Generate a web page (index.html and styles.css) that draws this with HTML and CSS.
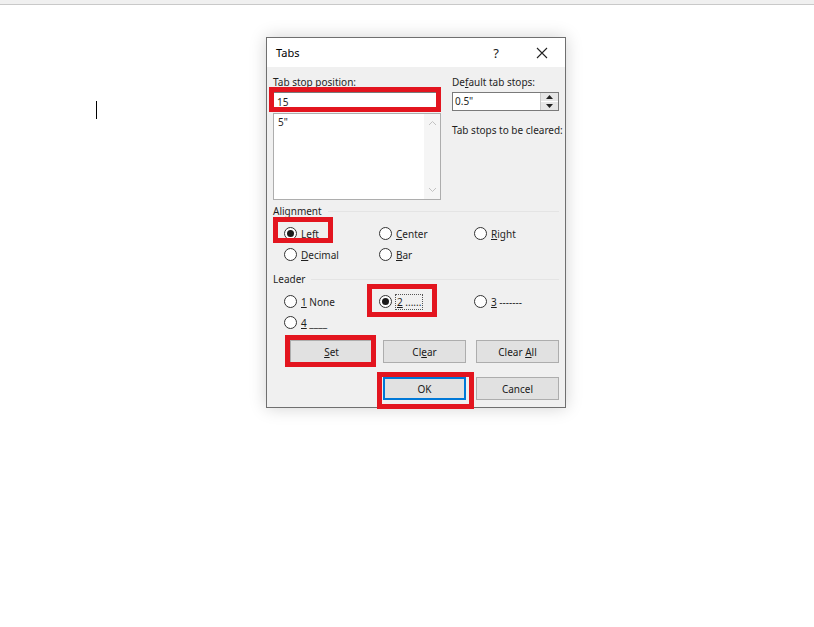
FILE: index.html
```html
<!DOCTYPE html>
<html>
<head>
    <meta charset="UTF-8">
    <title>Tabs</title>
    <link rel="stylesheet" href="styles.css">
</head>
<body>
    <div class="topbar"></div>
    <div class="caret"></div>

    <div class="dialog">
        <div class="titlebar">
            <span class="title">Tabs</span>
            <div class="title-buttons">
                <div class="tbtn">?</div>
                <div class="tbtn">
                    <svg width="12" height="12" viewBox="0 0 12 12">
                        <path d="M1 1 L11 11 M11 1 L1 11" stroke="#222" stroke-width="1.1" fill="none" />
                    </svg>
                </div>
            </div>
        </div>

        <div class="body">
            <div class="top">
                <div class="col-left">
                    <label class="lbl"><u>T</u>ab stop position:</label>
                    <div class="field">15</div>
                    <div class="listbox">
                        <div class="list-item">5"</div>
                        <div class="scroll">
                            <svg width="9" height="6" viewBox="0 0 9 6"><path d="M1 5 L4.5 1.5 L8 5" stroke="#c2c2c2" fill="none" /></svg>
                            <svg width="9" height="6" viewBox="0 0 9 6"><path d="M1 1 L4.5 4.5 L8 1" stroke="#c2c2c2" fill="none" /></svg>
                        </div>
                    </div>
                </div>
                <div class="col-right">
                    <label class="lbl">De<u>f</u>ault tab stops:</label>
                    <div class="spin-field">
                        <div class="spin-text">0.5"</div>
                        <div class="spin">
                            <div class="spin-up"><svg width="7" height="4" viewBox="0 0 7 4"><path d="M0 4 L3.5 0 L7 4 Z" fill="#222" /></svg></div>
                            <div class="spin-down"><svg width="7" height="4" viewBox="0 0 7 4"><path d="M0 0 L3.5 4 L7 0 Z" fill="#222" /></svg></div>
                        </div>
                    </div>
                    <div class="lbl cleared">Tab stops to be cleared:</div>
                </div>
            </div>

            <div class="group-title">Alignment<span class="rule"></span></div>
            <div class="radios">
                <div class="radio"><span class="dot on"></span><span><u>L</u>eft</span></div>
                <div class="radio"><span class="dot"></span><span><u>C</u>enter</span></div>
                <div class="radio"><span class="dot"></span><span><u>R</u>ight</span></div>
                <div class="radio"><span class="dot"></span><span><u>D</u>ecimal</span></div>
                <div class="radio"><span class="dot"></span><span><u>B</u>ar</span></div>
            </div>

            <div class="group-title leader">Leader<span class="rule"></span></div>
            <div class="radios">
                <div class="radio"><span class="dot"></span><span><u>1</u> None</span></div>
                <div class="radio"><span class="dot on"></span><span class="focus"><u>2</u> ......</span></div>
                <div class="radio"><span class="dot"></span><span><u>3</u> -------</span></div>
                <div class="radio"><span class="dot"></span><span><u>4</u> ____</span></div>
            </div>

            <div class="buttons">
                <div class="btn"><span><u>S</u>et</span></div>
                <div class="btn"><span>Cl<u>e</u>ar</span></div>
                <div class="btn"><span>Clear <u>A</u>ll</span></div>
            </div>
            <div class="buttons second">
                <div class="btn default">OK</div>
                <div class="btn">Cancel</div>
            </div>
        </div>
    </div>

    <div class="mark mark-position"></div>
    <div class="mark mark-left"></div>
    <div class="mark mark-leader"></div>
    <div class="mark mark-set"></div>
    <div class="mark mark-ok"></div>
</body>
</html>
```

FILE: styles.css
```css
* {
    box-sizing: border-box;
    margin: 0;
    padding: 0;
}

body {
    background: #fff;
    font-family: 'Noto Sans', 'Open Sans', sans-serif;
    font-size: 10px;
    color: #1f1f1f;
    width: 814px;
    height: 627px;
    overflow: hidden;
}

u {
    text-decoration: underline;
    text-underline-offset: 1px;
}

.topbar {
    height: 5px;
    background: #f0f0f0;
    border-bottom: 1px solid #c9c9c9;
}

.caret {
    position: absolute;
    left: 96px;
    top: 101px;
    width: 1px;
    height: 18px;
    background: #000;
}

.dialog {
    position: absolute;
    left: 266px;
    top: 37px;
    width: 300px;
    height: 371px;
    border: 1px solid #6f6f6f;
    background: #f0f0f0;
    box-shadow: 0 0 16px rgba(0, 0, 0, 0.18);
}

.titlebar {
    height: 29px;
    background: #fff;
    display: flex;
    justify-content: space-between;
    align-items: center;
}

.title {
    padding-left: 9px;
    font-size: 11px;
    color: #000;
}

.title-buttons {
    display: flex;
    height: 100%;
}

.tbtn {
    width: 46px;
    height: 100%;
    display: flex;
    align-items: center;
    justify-content: center;
    font-size: 13px;
    color: #222;
}

.body {
    padding: 7px 6px 0 6px;
}

.top {
    display: grid;
    grid-template-columns: 168px 107px;
    column-gap: 11px;
}

.lbl {
    display: block;
    height: 16px;
    line-height: 16px;
    margin-bottom: 2px;
    white-space: nowrap;
}

.field {
    height: 20px;
    background: #fff;
    border: 1px solid #7a7a7a;
    padding-left: 3px;
    line-height: 18px;
}

.listbox {
    margin-top: 1px;
    height: 87px;
    background: #fff;
    border: 1px solid #adadad;
    display: flex;
    justify-content: space-between;
}

.list-item {
    padding: 1px 0 0 4px;
    line-height: 14px;
}

.scroll {
    width: 16px;
    background: #f5f5f5;
    display: flex;
    flex-direction: column;
    justify-content: space-between;
    align-items: center;
    padding: 6px 0 6px 0;
}

.spin-field {
    height: 19px;
    margin-top: 1px;
    display: flex;
    background: #fff;
    border: 1px solid #7a7a7a;
}

.spin-text {
    flex: 1;
    padding-left: 2px;
    line-height: 17px;
}

.spin {
    width: 18px;
    display: flex;
    flex-direction: column;
    border-left: 1px solid #c8c8c8;
}

.spin-up,
.spin-down {
    flex: 1;
    background: #e6e6e6;
    display: flex;
    align-items: center;
    justify-content: center;
}

.spin-up {
    border-bottom: 1px solid #fff;
}

.cleared {
    margin-top: 11px;
}

.group-title {
    margin-top: 3px;
    height: 16px;
    line-height: 16px;
    display: flex;
    align-items: center;
}

.group-title.leader {
    margin-top: 6px;
}

.rule {
    flex: 1;
    height: 1px;
    margin: 1px 0 0 6px;
    background: #e4e4e4;
}

.radios {
    margin-top: 4px;
    padding-left: 11px;
    display: grid;
    grid-template-columns: 95px 95px 95px;
}

.radio {
    height: 21px;
    display: flex;
    align-items: center;
    white-space: nowrap;
}

.dot {
    width: 13px;
    height: 13px;
    border: 1px solid #333;
    border-radius: 50%;
    background: #fff;
    margin-right: 4px;
    display: flex;
    align-items: center;
    justify-content: center;
}

.dot.on::after {
    content: "";
    width: 7px;
    height: 7px;
    border-radius: 50%;
    background: #1a1a1a;
}

.focus {
    outline: 1px dotted #555;
    padding: 0 1px;
    line-height: 14px;
}

.buttons {
    margin-top: 7px;
    padding-left: 17px;
    display: grid;
    grid-template-columns: 83px 83px 83px;
    column-gap: 10px;
}

.buttons.second {
    margin-top: 14px;
}

.buttons.second .btn:first-child {
    grid-column: 2;
}

.btn {
    height: 23px;
    background: #e1e1e1;
    border: 1px solid #adadad;
    display: flex;
    align-items: center;
    justify-content: center;
    color: #1a1a1a;
    white-space: nowrap;
}

.btn.default {
    border: 1px solid #0078d7;
    box-shadow: inset 0 0 0 1px #0078d7;
}

.mark {
    position: absolute;
    border: 5px solid #e3151f;
}

.mark-position {
    left: 269px;
    top: 87px;
    width: 172px;
    height: 25px;
}

.mark-left {
    left: 273px;
    top: 217px;
    width: 60px;
    height: 26px;
}

.mark-leader {
    left: 367px;
    top: 284px;
    width: 70px;
    height: 33px;
}

.mark-set {
    left: 285px;
    top: 335px;
    width: 91px;
    height: 32px;
}

.mark-ok {
    left: 377px;
    top: 372px;
    width: 97px;
    height: 37px;
}
```
